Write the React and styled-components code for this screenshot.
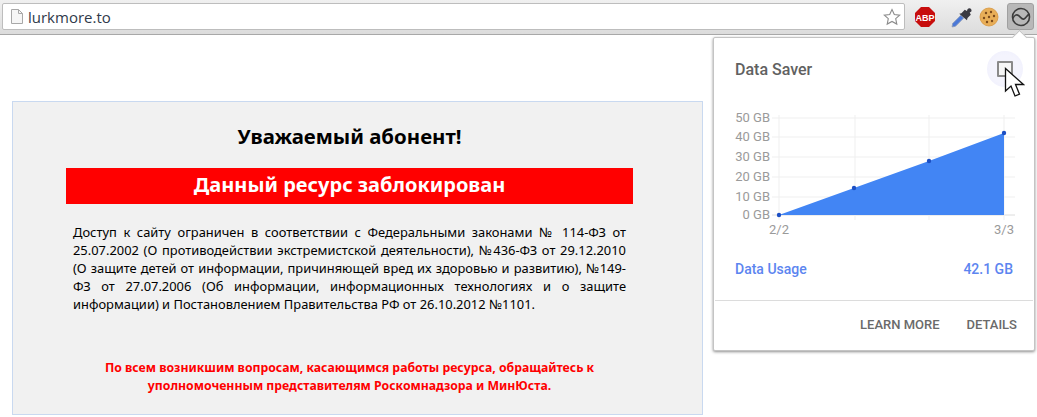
import React from 'react'
import styled, { createGlobalStyle } from 'styled-components'

const Global = createGlobalStyle`
  html, body { margin: 0; padding: 0; background: #fff; }
  body { width: 1037px; height: 417px; overflow: hidden; position: relative; font-family: "Noto Sans", "Open Sans", sans-serif; }
`

const Toolbar = styled.header`
  height: 35px;
  box-sizing: border-box;
  padding: 3px 0 0 2px;
  display: flex;
  align-items: flex-start;
  background: linear-gradient(#f0f0f0, #dcdcdc);
  border-bottom: 1px solid #a8a8a8;
`

const Omnibox = styled.div`
  flex: 0 0 903px;
  height: 27px;
  box-sizing: border-box;
  display: flex;
  align-items: center;
  gap: 5px;
  padding: 0 3px 0 8px;
  background: #fff;
  border: 1px solid #bdbdbd;
  border-radius: 2px;
`

const Url = styled.span`
  flex: 1;
  font-family: "Open Sans", "Noto Sans", sans-serif;
  font-size: 15px;
  color: #303a4a;
`

const Extensions = styled.div`
  display: flex;
  align-items: center;
  padding-left: 8px;
  height: 27px;
`

const ExtSlot = styled.div`
  flex: none;
  width: 24px;
  height: 24px;
  margin-left: ${(p) => p.$gap || 0}px;
  display: flex;
  align-items: center;
  justify-content: center;
`

const ActiveSlot = styled(ExtSlot)`
  width: 27px;
  height: 27px;
  background: #b8b8b8;
  border: 1px solid #a0a0a0;
  border-radius: 3px;
  box-sizing: border-box;
`

const Page = styled.main`
  padding: 66px 334px 0 12px;
`

const Notice = styled.section`
  width: 691px;
  height: 314px;
  box-sizing: border-box;
  padding: 19px 69px 0 53px;
  background: #f1f1f1;
  border: 1px solid #c9d9f0;
`

const Title = styled.h1`
  margin: 0;
  font-size: 20.4px;
  line-height: 30px;
  font-weight: 700;
  color: #000;
  text-align: center;
`

const Banner = styled.div`
  margin-top: 17px;
  height: 36px;
  box-sizing: border-box;
  padding-bottom: 4px;
  display: flex;
  align-items: center;
  justify-content: center;
  background: #ff0000;
  color: #fff;
  font-size: 20px;
  font-weight: 700;
`

const Body = styled.p`
  margin: 19px 7px 0;
  font-size: 12.9px;
  line-height: 18px;
  color: #000;
  text-align: justify;
`

const Contact = styled.p`
  margin: 46px 0 0;
  font-size: 12.25px;
  line-height: 18px;
  font-weight: 700;
  color: #ff0000;
  text-align: center;
`

const Popup = styled.aside`
  position: absolute;
  left: 713px;
  top: 37px;
  width: 322px;
  height: 314px;
  box-sizing: border-box;
  display: flex;
  flex-direction: column;
  background: #fff;
  border: 1px solid #c4c4c4;
  border-radius: 2px;
  box-shadow: 0 1px 3px rgba(0, 0, 0, 0.45);
  font-family: Roboto, sans-serif;
  &::before {
    content: '';
    position: absolute;
    right: 9px;
    top: -6px;
    width: 10px;
    height: 10px;
    background: #fff;
    border-left: 1px solid #c4c4c4;
    border-top: 1px solid #c4c4c4;
    transform: rotate(45deg);
  }
`

const PopupHeader = styled.div`
  height: 62px;
  box-sizing: border-box;
  padding: 22px 21px 0;
  font-size: 16px;
  line-height: 20px;
  font-weight: 500;
  color: #616161;
`

const Chart = styled.svg`
  display: block;
  width: 320px;
  height: 150px;
  font-family: Roboto, sans-serif;
  font-size: 13px;
`

const UsageRow = styled.div`
  display: flex;
  justify-content: space-between;
  padding: 9px 21px 0 21px;
  height: 39px;
  box-sizing: border-box;
  font-size: 14px;
  line-height: 20px;
  font-weight: 500;
  color: #5c85f0;
`

const Actions = styled.div`
  flex: 1;
  margin: 11px 1px 0;
  display: flex;
  justify-content: flex-end;
  gap: 27px;
  padding: 14px 16px 0 0;
  border-top: 1px solid #dcdcdc;
`

const ActionLink = styled.span`
  font-size: 13px;
  line-height: 20px;
  font-weight: 500;
  color: #6a6a6a;
`

const CheckHalo = styled.div`
  position: absolute;
  left: 273px;
  top: 13px;
  width: 36px;
  height: 36px;
  border-radius: 50%;
  background: radial-gradient(circle, #f4f4fd 55%, #f1f1fd 75%, #ffffff 100%);
  display: flex;
  align-items: center;
  justify-content: center;
`

const Check = styled.div`
  width: 16px;
  height: 16px;
  box-sizing: border-box;
  border: 2px solid #8a8a8a;
  border-radius: 1px;
  background: #f6f6f6;
`

const Cursor = styled.svg`
  position: absolute;
  left: 1004px;
  top: 67px;
  width: 21px;
  height: 31px;
`

const yTicks = [
  ['50 GB', 18],
  ['40 GB', 37],
  ['30 GB', 57],
  ['20 GB', 77],
  ['10 GB', 97],
  ['0 GB', 115],
]
const xGrid = [65, 141, 215, 290]
const points = [[65, 115], [140, 88], [215, 61], [290, 33]]

const FileIcon = () => (
  <svg width="12" height="15" viewBox="0 0 12 15">
    <path d="M0.5 0.5H7.5L11.5 4.5V14.5H0.5Z" fill="#f6f6f6" stroke="#a8a8a8" />
    <path d="M7.5 0.5V4.5H11.5" fill="none" stroke="#a8a8a8" />
  </svg>
)

const StarIcon = () => (
  <svg width="18" height="18" viewBox="0 0 18 18">
    <path d="M9 1.5l2.300 5 5.400.6-4 3.600 1.100 5.400L9 13.400l-4.800 2.700 1.100-5.400-4-3.600 5.400-.6z" fill="#fff" stroke="#8c8c8c" strokeWidth="1.100" />
  </svg>
)

const AbpIcon = () => (
  <svg width="20" height="20" viewBox="0 0 20 20">
    <path d="M6 0h8l6 6v8l-6 6H6l-6-6V6z" fill="#c70d0d" />
    <text x="10" y="13.500" textAnchor="middle" fontFamily="Liberation Sans, sans-serif" fontWeight="700" fontSize="9" fill="#fff">ABP</text>
  </svg>
)

const DropperIcon = () => (
  <svg width="22" height="22" viewBox="0 0 20 20">
    <path d="M1 19l.5-3L9 8.500l2.500 2.500L4 18.500z" fill="#4a78d8" stroke="#8a9ab8" strokeWidth="0.800" />
    <path d="M7.500 7l2-.5 3-3 2 1 .5-1.500c1.500-2 4.500-.5 3.500 2l-1.500 1 1 2-3 3-.5 2z" fill="#3a3a42" />
  </svg>
)

const CookieIcon = () => (
  <svg width="20" height="20" viewBox="0 0 20 20">
    <circle cx="10" cy="10" r="9" fill="#e8ae58" stroke="#d8963c" strokeWidth="0.800" />
    {[[7, 6], [12, 5], [5, 11], [10, 10], [15, 9], [8, 15], [13, 14]].map(([cx, cy]) => (
      <circle key={cx * 100 + cy} cx={cx} cy={cy} r="1.200" fill="#7a4a1c" />
    ))}
  </svg>
)

const SaverIcon = () => (
  <svg width="20" height="20" viewBox="0 0 20 20" fill="none" stroke="#3c3c3c" strokeWidth="1.600">
    <circle cx="10" cy="10" r="8.500" />
    <path d="M1.800 11.500C3.500 8 5.500 7 7.500 8.500s3.500 4.500 5.500 3.500 3-3.500 5.200-5" />
  </svg>
)

const App = () => (
  <>
    <Global />
    <Toolbar>
      <Omnibox>
        <FileIcon />
        <Url>lurkmore.to</Url>
        <StarIcon />
      </Omnibox>
      <Extensions>
        <ExtSlot><AbpIcon /></ExtSlot>
        <ExtSlot $gap={13}><DropperIcon /></ExtSlot>
        <ExtSlot $gap={3}><CookieIcon /></ExtSlot>
        <ActiveSlot $gap={6}><SaverIcon /></ActiveSlot>
      </Extensions>
    </Toolbar>
    <Page>
      <Notice>
        <Title>Уважаемый абонент!</Title>
        <Banner>Данный ресурс заблокирован</Banner>
        <Body>
          Доступ к сайту ограничен в соответствии с Федеральными законами № 114-ФЗ от 25.07.2002 (О противодействии экстремистской деятельности), №436-ФЗ от 29.12.2010 (О защите детей от информации, причиняющей вред их здоровью и развитию), №149-ФЗ от 27.07.2006 (Об информации, информационных технологиях и о защите информации) и Постановлением Правительства РФ от 26.10.2012 №1101.
        </Body>
        <Contact>
          По всем возникшим вопросам, касающимся работы ресурса, обращайтесь к<br />
          уполномоченным представителям Роскомнадзора и МинЮста.
        </Contact>
      </Notice>
    </Page>
    <Popup>
      <PopupHeader>Data Saver</PopupHeader>
      <CheckHalo><Check /></CheckHalo>
      <Chart viewBox="0 0 320 150">
        {yTicks.map(([label, y]) => (
          <g key={label}>
            <line x1="58" x2="301" y1={y} y2={y} stroke={y === 115 ? '#dcdcdc' : '#efefef'} />
            <text x="56" y={y + 4} textAnchor="end" fill="#9a9a9a">{label}</text>
          </g>
        ))}
        {xGrid.map((x) => (
          <line key={x} x1={x} x2={x} y1="15" y2="120" stroke="#efefef" />
        ))}
        <polygon points="65,115 140,88 215,61 290,33 290,115" fill="#4285f4" />
        {points.map(([cx, cy]) => (
          <circle key={cx} cx={cx} cy={cy} r="2.200" fill="#1c4fc4" />
        ))}
        <text x="65" y="134" textAnchor="middle" fill="#9a9a9a">2/2</text>
        <text x="290" y="134" textAnchor="middle" fill="#9a9a9a">3/3</text>
      </Chart>
      <UsageRow>
        <span>Data Usage</span>
        <span>42.1 GB</span>
      </UsageRow>
      <Actions>
        <ActionLink>LEARN MORE</ActionLink>
        <ActionLink>DETAILS</ActionLink>
      </Actions>
    </Popup>
    <Cursor viewBox="0 0 21 31">
      <path d="M1.500 1.500V24l5.500-5 4 10 4.500-1.800-4-9.700h8z" fill="#fff" stroke="#111" strokeWidth="1.300" />
    </Cursor>
  </>
)

export default App
